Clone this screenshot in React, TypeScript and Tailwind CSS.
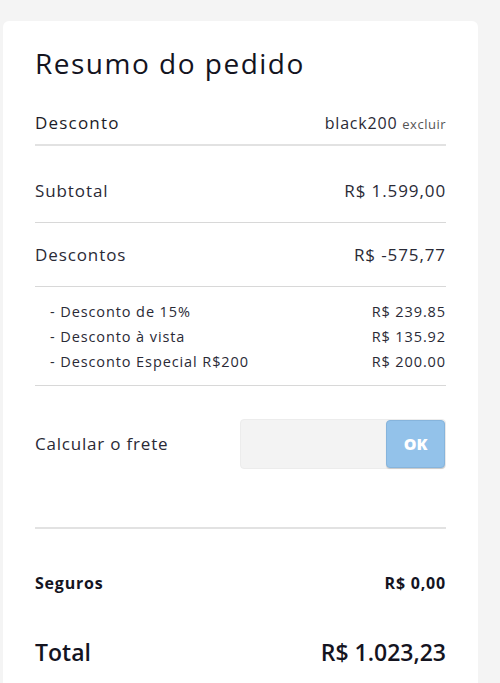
const font = { fontFamily: '"Open Sans", "Liberation Sans", sans-serif' };

const discounts = [
  { label: "- Desconto de 15%", value: "R$ 239.85" },
  { label: "- Desconto à vista", value: "R$ 135.92" },
  { label: "- Desconto Especial R$200", value: "R$ 200.00" },
];

export default function App() {
  return (
    <div className="min-h-screen bg-[#f4f4f4] pt-[21px] pl-[3px]" style={font}>
      <div className="w-[475px] min-h-[700px] bg-white rounded-md px-8 pt-[25px]">
        <h1 className="text-[28px] leading-[34px] tracking-[1.5px] text-[#14141f]">Resumo do pedido</h1>

        <div className="mt-[22px] h-[44px] flex items-center justify-between border-b-2 border-[#e2e2e2]">
          <span className="text-[17px] font-medium tracking-[1.2px] text-[#1c1c28]">Desconto</span>
          <span className="text-[16px] tracking-[0.8px] text-[#2a2a36]">
            black200 <span className="text-[13px] tracking-[0.5px] text-[#555]">excluir</span>
          </span>
        </div>

        <div className="pt-[33px] pb-[19px] flex items-center justify-between border-b border-[#d8d8d8] text-[17px] leading-6 tracking-[0.9px] text-[#2a2a36]">
          <span>Subtotal</span>
          <span>R$ 1.599,00</span>
        </div>

        <div className="pt-5 pb-[19px] flex items-center justify-between border-b border-[#d8d8d8] text-[17px] leading-6 tracking-[0.9px] text-[#2a2a36]">
          <span>Descontos</span>
          <span>R$ -575,77</span>
        </div>

        <div className="pt-3 pb-[11px] border-b border-[#d8d8d8] text-[14.5px] leading-[25px] tracking-[0.9px] text-[#2a2a36]">
          {discounts.map((d) => (
            <div key={d.label} className="flex justify-between pl-[15px]">
              <span>{d.label}</span>
              <span>{d.value}</span>
            </div>
          ))}
        </div>

        <div className="pt-[33px] pb-[58px] flex items-center justify-between border-b-2 border-[#e2e2e2]">
          <span className="text-[17px] tracking-[0.8px] text-[#2a2a36]">Calcular o frete</span>
          <div className="flex w-[206px] h-[50px] rounded bg-[#f3f3f3] border border-[#ececec]">
            <input className="flex-1 min-w-0 bg-transparent outline-none px-3" />
            <button className="w-[59px] h-full rounded bg-[#93c2ea] border border-[#86b4dc] text-white font-extrabold text-[16px] shadow-[0_1px_1px_rgba(0,0,0,0.15)]">
              OK
            </button>
          </div>
        </div>

        <div className="pt-[42px] flex items-center justify-between text-[16px] font-bold tracking-[0.8px] text-[#14141f]">
          <span>Seguros</span>
          <span>R$ 0,00</span>
        </div>

        <div className="pt-[40px] flex items-center justify-between text-[23px] font-semibold text-[#14141f]">
          <span>Total</span>
          <span>R$ 1.023,23</span>
        </div>
      </div>
    </div>
  );
}
